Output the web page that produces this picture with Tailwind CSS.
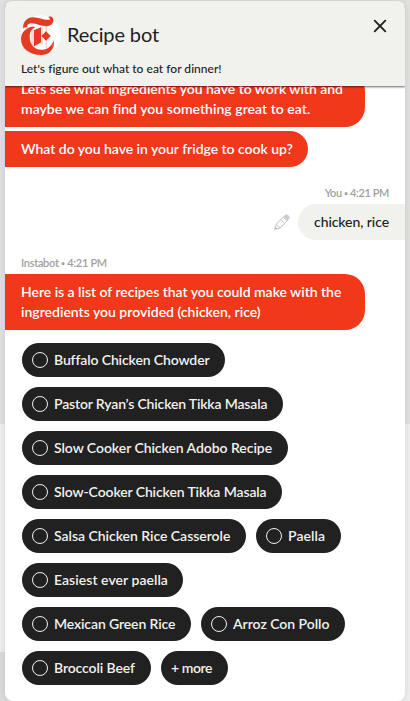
<!DOCTYPE html>
<html lang="en"><head><meta charset="utf-8"><title>Recipe bot</title>
<script src="https://cdn.jsdelivr.net/npm/@tailwindcss/browser@4"></script></head>
<body class="h-[701px] overflow-hidden whitespace-nowrap bg-linear-to-b from-[#e2e2e2] from-[424px] to-[#f0f0f0] to-[424px] font-['Lato',sans-serif] text-[14px] leading-5 text-[#212121]">
<div class="relative h-[701px] px-[5px] pt-px">
  <div class="absolute bottom-0 left-0 h-[49px] w-[12px] bg-[#dcdcdc]"></div>
  <main class="relative flex h-[700px] flex-col overflow-hidden rounded-lg bg-white shadow-[0_0_8px_rgba(0,0,0,0.12)]">
    <header class="relative z-10 h-[85px] shrink-0 bg-[#f1f2ed] px-4 pt-[14px] shadow-[0_1px_2px_rgba(0,0,0,0.6)]">
      <div class="flex h-10 items-center gap-[6px]">
        <svg class="size-10 shrink-0" viewBox="0 0 40 40">
          <circle cx="20" cy="20" r="19.8" fill="#fff"/>
          <g fill="#e53b25">
            <path d="M2.200 13.500C1.500 7 6 2.100 12 2.200c6 .1 12 3.500 17 2.300.2-1.200-.8-1.800-1.800-2.600C31 .2 33 3 32.200 6.500 31.400 10.800 26 11.900 21.500 10.800c-5-1.300-9-3.300-12.500-2.400-2.800.7-3.400 2.600-2.400 4.200-1.400-.6-3 0-4.400.9Z"/>
            <path d="M14 12.600C10.500 14 8.700 17.500 8.700 22c0 8 5.300 12.800 11.500 12.800 6 0 10.200-3.300 12.600-9.300C34 34 28.500 40 20 40 8.300 40 0 33.200 0 24.300 0 16.500 6 12 13 11.500Z"/>
            <path d="m12.800 15.300 7.200-3v15.200l-7.200 4Z"/>
            <path d="m25 16.200 4.700 4.800-4.700 4.800-4.700-4.800Z"/>
          </g>
          <path d="M11 15v17M21 12v17M25.200 11.500v21" fill="none" stroke="#e53b25" stroke-opacity=".6" stroke-width=".6"/>
        </svg>
        <h1 class="-mt-0.5 text-[20px] font-normal tracking-[-0.12px]">Recipe bot</h1>
      </div>
      <p class="mt-[6px] text-[12px] leading-4 font-medium tracking-[0.02px]">Let's figure out what to eat for dinner!</p>
      <svg class="absolute top-[18px] right-[18px] size-[14px]" viewBox="0 0 14 14" fill="none" stroke="#212121" stroke-width="1.9"><path d="m1.200 1.200 11.600 11.600M12.800 1.200 1.200 12.800"/></svg>
    </header>

    <section class="-mt-[15px] flex flex-col items-start font-semibold text-white">
      <div class="h-14 w-[360px] rounded-r-[20px] bg-[#f1381b] px-4 pt-2">
        <p class="tracking-[-0.03px]">Lets see what ingredients you have to work with and</p>
        <p class="tracking-[0.03px]">maybe we can find you something great to eat.</p>
      </div>
      <div class="mt-1 h-9 w-[303px] rounded-r-[18px] bg-[#f1381b] px-4 pt-2 tracking-[-0.03px]">What do you have in your fridge to cook up?</div>
    </section>

    <section class="mt-[18px] flex flex-col items-end">
      <p class="mr-4 h-[19px] text-[11px] leading-4 font-semibold tracking-[-0.4px] text-[#a0a0a0]">You <span class="align-[1px] text-[7px]">•</span> 4:21 PM</p>
      <div class="flex items-center gap-[8px]">
        <svg class="size-4" viewBox="0 0 16 16"><path d="m.7 15.300 1.600-5.200 7.200-7.200 3.800 3.800-7.200 7.200L.7 15.300Z" fill="#fff" stroke="#c0c0c0"/><path d="m9 3 2.200-2.100c2-1.600 5.600 1.700 4 4L13 7 9 3Z" fill="#ccc"/><path d="m6.500 5.700 3.900 3.900M2.300 10.200l3.700 3.700" stroke="#c4c4c4"/><path d="m.7 15.300.8-2.600 1.900 1.800Z" fill="#b5b5b5"/></svg>
        <div class="h-9 w-[107px] rounded-l-[18px] bg-[#f1f2ed] pt-2 pl-4 font-medium tracking-[-0.07px]">chicken, rice</div>
      </div>
    </section>

    <section class="mt-[15px]">
      <p class="h-[19px] pl-4 text-[11px] leading-4 font-semibold tracking-[-0.3px] text-[#a0a0a0]">Instabot <span class="align-[1px] text-[7px]">•</span> 4:21 PM</p>
      <div class="h-14 w-[360px] rounded-r-[20px] bg-[#f1381b] px-4 pt-2 font-semibold text-white">
        <p class="tracking-[-0.03px]">Here is a list of recipes that you could make with the</p>
        <p>ingredients you provided (chicken, rice)</p>
      </div>
    </section>

    <ul id="choices" class="mt-[13px] flex flex-wrap gap-[10px] pr-[53px] pl-[17px] font-semibold text-[#f1f2ed]"></ul>
  </main>
</div>
<template id="choice">
  <li class="flex h-[34px] items-center gap-[6px] rounded-full bg-[#212121] pl-[10px]"><i class="size-4 shrink-0 rounded-full border border-[#f1f2ed]"></i><span></span></li>
</template>
<script>
  const choices = [
    ["Buffalo Chicken Chowder", 203, -0.12],
    ["Pastor Ryan’s Chicken Tikka Masala", 261, -0.16],
    ["Slow Cooker Chicken Adobo Recipe", 266, -0.05],
    ["Slow-Cooker Chicken Tikka Masala", 260, -0.11],
    ["Salsa Chicken Rice Casserole", 224, -0.03],
    ["Paella", 85, 0.1],
    ["Easiest ever paella", 161, 0.04],
    ["Mexican Green Rice", 169, -0.12],
    ["Arroz Con Pollo", 144, -0.03],
    ["Broccoli Beef", 129, -0.1],
    ["+ more", 67, -0.45]
  ];
  const template = document.getElementById("choice");
  for (const [label, width, tracking] of choices) {
    const item = template.content.firstElementChild.cloneNode(true);
    const text = item.querySelector("span");
    item.style.width = width + "px";
    text.textContent = label;
    text.style.letterSpacing = tracking + "px";
    if (label.startsWith("+")) item.querySelector("i").remove();
    document.getElementById("choices").append(item);
  }
</script>
</body></html>
